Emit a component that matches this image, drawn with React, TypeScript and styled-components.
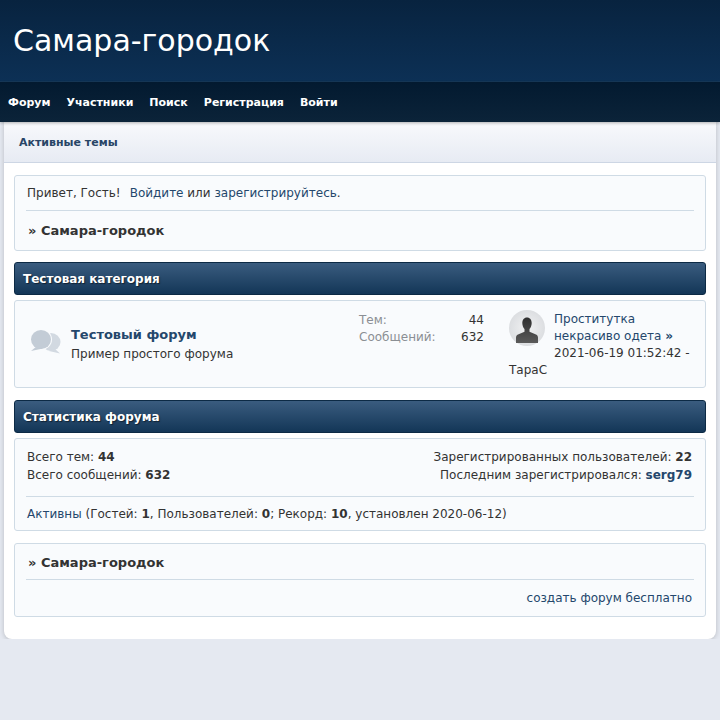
import styled, { createGlobalStyle } from "styled-components";

const GlobalStyle = createGlobalStyle`
  html, body {
    margin: 0;
    padding: 0;
    background: #e5e9f1;
    font-family: "DejaVu Sans", sans-serif;
    font-size: 12px;
    line-height: 17px;
    color: #333;
  }
  * { box-sizing: border-box; }
`;

const Header = styled.header`
  height: 82px;
  padding: 24px 13px 0;
  background: linear-gradient(to bottom, #08233f, #0c3055);
  border-bottom: 1px solid #17395a;
`;

const Title = styled.h1`
  margin: 0;
  font-size: 30px;
  line-height: 34px;
  font-weight: 400;
  color: #fff;
`;

const Nav = styled.nav`
  position: relative;
  display: flex;
  gap: 16px;
  height: 40px;
  padding: 0 8px;
  align-items: center;
  background: linear-gradient(to bottom, #031a30, #0b2339);
  box-shadow: 0 1px 3px rgba(0, 0, 0, 0.3);
`;

const NavLink = styled.a`
  font-size: 11px;
  font-weight: 700;
  color: #fff;
`;

const Page = styled.main`
  margin: 0 4px;
  height: 517px;
  background: #fff;
  border-radius: 0 0 8px 8px;
  box-shadow: 0 1px 5px rgba(0, 0, 0, 0.2);
`;

const Linktree = styled.div`
  height: 41px;
  padding: 0 15px;
  display: flex;
  align-items: center;
  font-size: 11px;
  font-weight: 700;
  color: #284566;
  background: linear-gradient(to bottom, #f8f9fc, #e7ebf3);
  border-bottom: 1px solid #cdd6e4;
`;

const Content = styled.div`
  padding: 12px 10px 0;
  display: flex;
  flex-direction: column;
`;

const Box = styled.section<{ $top?: number; $height: number }>`
  margin-top: ${(p) => p.$top ?? 0}px;
  height: ${(p) => p.$height}px;
  padding: 0 11px;
  background: #f9fbfd;
  border: 1px solid #cfdbe5;
  border-radius: 3px;
`;

const Row = styled.div`
  display: flex;
  justify-content: space-between;
`;

const Column = styled.div<{ $right?: boolean }>`
  padding-top: 9px;
  display: flex;
  flex-direction: column;
  align-items: ${(p) => (p.$right ? "flex-end" : "flex-start")};
`;

const StatsRow = styled(Row)`
  padding-right: 2px;
`;

const Line = styled.div<{ $h: number; $top?: number }>`
  height: ${(p) => p.$h}px;
  margin-top: ${(p) => p.$top ?? 0}px;
  padding-left: 1px;
  display: flex;
  align-items: center;
  white-space: pre;
`;

const Greeting = styled.span`
  margin-right: 9px;
`;

const Divider = styled.hr<{ $top?: number }>`
  margin: ${(p) => p.$top ?? 0}px 0 0;
  border: 0;
  border-top: 1px solid #cfdbe5;
`;

const Crumb = styled.div<{ $h: number; $top?: number }>`
  height: ${(p) => p.$h}px;
  margin-top: ${(p) => p.$top ?? 0}px;
  padding-left: 2px;
  display: flex;
  align-items: center;
  font-size: 13px;
  font-weight: 700;
  color: #333;
  white-space: pre;
`;

const Link = styled.a`
  color: #24476c;
`;

const CatBar = styled.h2<{ $top: number }>`
  margin: ${(p) => p.$top}px 0 0;
  height: 33px;
  padding: 1px 8px 0;
  display: flex;
  align-items: center;
  font-size: 12px;
  font-weight: 700;
  color: #fff;
  text-shadow: 1px 1px 1px rgba(0, 0, 0, 0.5);
  background: linear-gradient(to bottom, #3a5c7f, #133657);
  border: 1px solid #0c2a45;
  border-radius: 3px;
`;

const ForumBox = styled(Box)`
  display: flex;
  padding: 0 12px 0 15px;
`;

const ForumMain = styled.div`
  flex: 1;
  display: flex;
  align-items: center;
  gap: 9px;
  padding-bottom: 1px;
`;

const ForumName = styled.div`
  margin-bottom: 2px;
  font-size: 13px;
  font-weight: 700;
  line-height: 19px;
  color: #24476c;
`;

const ForumStats = styled.div`
  width: 125px;
  margin-right: 25px;
  padding-top: 11px;
`;

const StatLabel = styled.span`
  color: #8b8f94;
`;

const Last = styled.div`
  width: 184px;
  padding-top: 10px;
`;

const Avatar = styled.svg`
  float: left;
  width: 36px;
  height: 36px;
  margin: -1px 9px 0 0;
`;

const Strong = styled.b`
  color: #333;
`;

const LinkStrong = styled.b`
  color: #24476c;
`;

const Credit = styled.div`
  height: 36px;
  padding-right: 2px;
  display: flex;
  align-items: center;
  justify-content: flex-end;
`;

export default function App() {
  return (
    <>
      <GlobalStyle />
      <Header>
        <Title>Самара-городок</Title>
      </Header>
      <Nav>
        <NavLink>Форум</NavLink>
        <NavLink>Участники</NavLink>
        <NavLink>Поиск</NavLink>
        <NavLink>Регистрация</NavLink>
        <NavLink>Войти</NavLink>
      </Nav>
      <Page>
        <Linktree>Активные темы</Linktree>
        <Content>
          <Box $height={76}>
            <Line $h={33} $top={1}>
              <Greeting>Привет, Гость!</Greeting>
              <Link>Войдите</Link> или <Link>зарегистрируйтесь</Link>.
            </Line>
            <Divider />
            <Crumb $h={39}>» Самара-городок</Crumb>
          </Box>
          <CatBar $top={11}>Тестовая категория</CatBar>
          <ForumBox $top={5} $height={88}>
            <ForumMain>
              <svg width="32" height="30" viewBox="0 0 32 30">
                <ellipse cx="21" cy="13" rx="9.500" ry="9" fill="#d2d9e1" />
                <path d="M24 19l6 5.500-11-2.500z" fill="#d2d9e1" />
                <ellipse cx="11" cy="10.500" rx="11" ry="10.500" fill="#f9fbfd" />
                <path d="M7 17l-6 5 12-2.500z" fill="#c3ccd6" />
                <ellipse cx="11" cy="10.500" rx="10" ry="9.500" fill="#c3ccd6" />
              </svg>
              <div>
                <ForumName>Тестовый форум</ForumName>
                <div>Пример простого форума</div>
              </div>
            </ForumMain>
            <ForumStats>
              <Row>
                <StatLabel>Тем:</StatLabel>
                <span>44</span>
              </Row>
              <Row>
                <StatLabel>Сообщений:</StatLabel>
                <span>632</span>
              </Row>
            </ForumStats>
            <Last>
              <Avatar viewBox="0 0 36 36">
                <defs>
                  <radialGradient id="avBg">
                    <stop offset="0" stopColor="#f1f2f3" />
                    <stop offset="1" stopColor="#dcdee1" />
                  </radialGradient>
                  <linearGradient id="avFg" x1="0" y1="0" x2="0" y2="1">
                    <stop offset="0" stopColor="#2f2f2f" />
                    <stop offset="1" stopColor="#5a5a5a" />
                  </linearGradient>
                </defs>
                <circle cx="18" cy="18" r="18" fill="url(#avBg)" />
                <path
                  fill="url(#avFg)"
                  d="M18 7.500c3 0 4.700 2.400 4.700 5.600 0 2.600-1 4.800-2.200 6v2.600l6.500 2.800c1.300.6 2 1.800 2 3.200V33H7v-5.300c0-1.400.7-2.600 2-3.200l6.500-2.800v-2.600c-1.200-1.200-2.200-3.400-2.200-6 0-3.200 1.700-5.600 4.700-5.600z"
                />
              </Avatar>
              <Link>Проститутка некрасиво одета</Link> <LinkStrong>»</LinkStrong>{" "}
              2021-06-19 01:52:42 - ТараС
            </Last>
          </ForumBox>
          <CatBar $top={12}>Статистика форума</CatBar>
          <Box $top={5} $height={93}>
            <StatsRow>
              <Column>
                <Line $h={18}>
                  Всего тем: <Strong>44</Strong>
                </Line>
                <Line $h={18}>
                  Всего сообщений: <Strong>632</Strong>
                </Line>
              </Column>
              <Column $right>
                <Line $h={18}>
                  Зарегистрированных пользователей: <Strong>22</Strong>
                </Line>
                <Line $h={18}>
                  Последним зарегистрировался: <LinkStrong>serg79</LinkStrong>
                </Line>
              </Column>
            </StatsRow>
            <Divider $top={12} />
            <Line $h={33} $top={1}>
              <Link>Активны</Link> (Гостей: <Strong>1</Strong>, Пользователей: <Strong>0</Strong>;
              Рекорд: <Strong>10</Strong>, установлен 2020-06-12)
            </Line>
          </Box>
          <Box $top={12} $height={74}>
            <Crumb $h={33} $top={2}>» Самара-городок</Crumb>
            <Divider />
            <Credit>
              <Link>создать форум бесплатно</Link>
            </Credit>
          </Box>
        </Content>
      </Page>
    </>
  );
}
